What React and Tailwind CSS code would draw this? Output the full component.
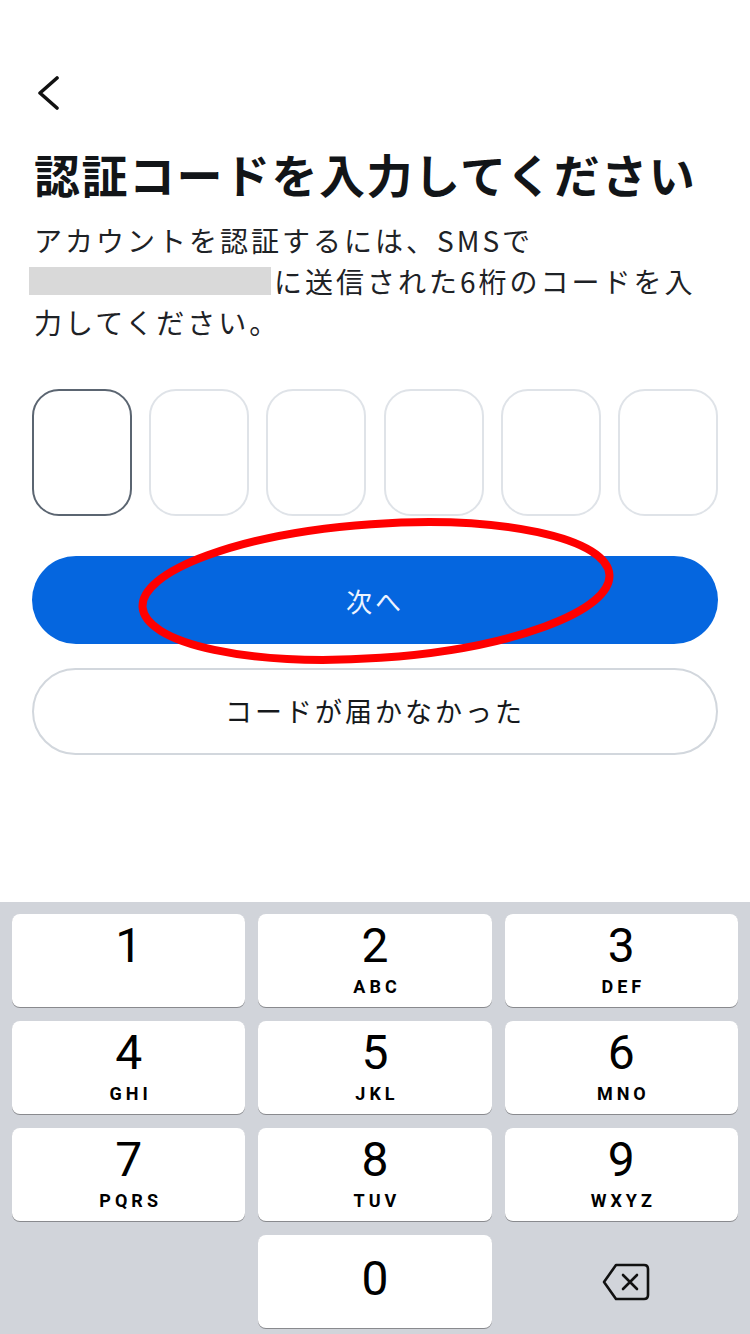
import React from "react";

const KEYS = [
  { d: "1", l: "" },
  { d: "2", l: "ABC" },
  { d: "3", l: "DEF" },
  { d: "4", l: "GHI" },
  { d: "5", l: "JKL" },
  { d: "6", l: "MNO" },
  { d: "7", l: "PQRS" },
  { d: "8", l: "TUV" },
  { d: "9", l: "WXYZ" },
];

const JP = { fontFamily: '"Noto Sans CJK JP", "Noto Sans", sans-serif' };

function Key({ d, l }) {
  return (
    <div className="h-[93px] rounded-[8px] bg-white shadow-[0_1px_0_#898a8e] flex flex-col items-center pt-[8px] font-['Roboto',sans-serif] text-black">
      <span className="text-[48px] leading-[48px]">{d}</span>
      {l && (
        <span className="mt-[8px] text-[18px] leading-[18px] font-bold tracking-[4px] pl-[4px]">{l}</span>
      )}
    </div>
  );
}

export default function App() {
  return (
    <div className="relative w-[750px] h-[1334px] bg-white flex flex-col overflow-hidden" style={JP}>
      {/* back */}
      <div className="pt-[76px] pl-[37px]">
        <svg width="24" height="34" viewBox="0 0 24 34" fill="none">
          <polyline points="20,2 3,17 20,32" stroke="#111" strokeWidth="3.6" strokeLinecap="round" strokeLinejoin="round" />
        </svg>
      </div>

      <div className="px-[32px]">
        <h1 className="mt-[35px] pl-[2px] text-[46px] leading-[56px] font-bold tracking-[1.5px] text-[#121518] whitespace-nowrap">
          認証コードを入力してください
        </h1>
        <p className="mt-[19px] pl-[2px] text-[28px] leading-[41px] tracking-[3px] text-[#1e2226] whitespace-nowrap">
          アカウントを認証するには、SMSで
          <br />
          <span className="inline-block w-[242px] h-[28px] bg-[#d9d9d9] ml-[-5px] mr-[3px] align-[-2px]" />
          に送信された6桁のコードを入
          <br />
          力してください。
        </p>

        {/* code boxes */}
        <div className="mt-[46px] flex justify-between">
          {[0, 1, 2, 3, 4, 5].map((i) => (
            <div
              key={i}
              className={
                i === 0
                  ? "w-[100px] h-[127px] rounded-[27px] border-2 border-[#5b6571]"
                  : "w-[100px] h-[127px] rounded-[27px] border-2 border-[#dfe3e8]"
              }
            />
          ))}
        </div>

        <button className="mt-[40px] w-full h-[88px] rounded-full bg-[#0566df] text-[#eef4ff] text-[26px] tracking-[3px] flex items-center justify-center">
          次へ
        </button>
        <button className="mt-[24px] w-full h-[87px] rounded-full border-2 border-[#d2d7dd] bg-white text-[#16191c] text-[27px] tracking-[3px] flex items-center justify-center">
          コードが届かなかった
        </button>
      </div>

      {/* keypad */}
      <div className="mt-auto h-[432px] bg-[#d1d4da] px-[12px] pt-[12px]">
        <div className="grid grid-cols-3 gap-x-[13px] gap-y-[14px]">
          {KEYS.map((k) => (
            <Key key={k.d} d={k.d} l={k.l} />
          ))}
          <div />
          <div className="h-[93px] rounded-[8px] bg-white shadow-[0_1px_0_#898a8e] flex justify-center pt-[20px] font-['Roboto',sans-serif] text-black">
            <span className="text-[48px] leading-[48px]">0</span>
          </div>
          <div className="h-[93px] flex items-center justify-center pl-[10px]">
            <svg width="48" height="38" viewBox="0 0 48 38" fill="none">
              <path
                d="M14 2 H42 Q46 2 46 6 V32 Q46 36 42 36 H14 L2 19 Z"
                stroke="#111"
                strokeWidth="2.6"
                strokeLinejoin="round"
              />
              <path d="M21 12 L35 26 M35 12 L21 26" stroke="#111" strokeWidth="2.6" strokeLinecap="round" />
            </svg>
          </div>
        </div>
      </div>

      {/* red annotation */}
      <svg className="absolute inset-0 pointer-events-none" width="750" height="1334" viewBox="0 0 750 1334">
        <ellipse cx="376" cy="591" rx="234" ry="67" transform="rotate(-4 376 591)" fill="none" stroke="#ff0000" strokeWidth="8" />
      </svg>
    </div>
  );
}
